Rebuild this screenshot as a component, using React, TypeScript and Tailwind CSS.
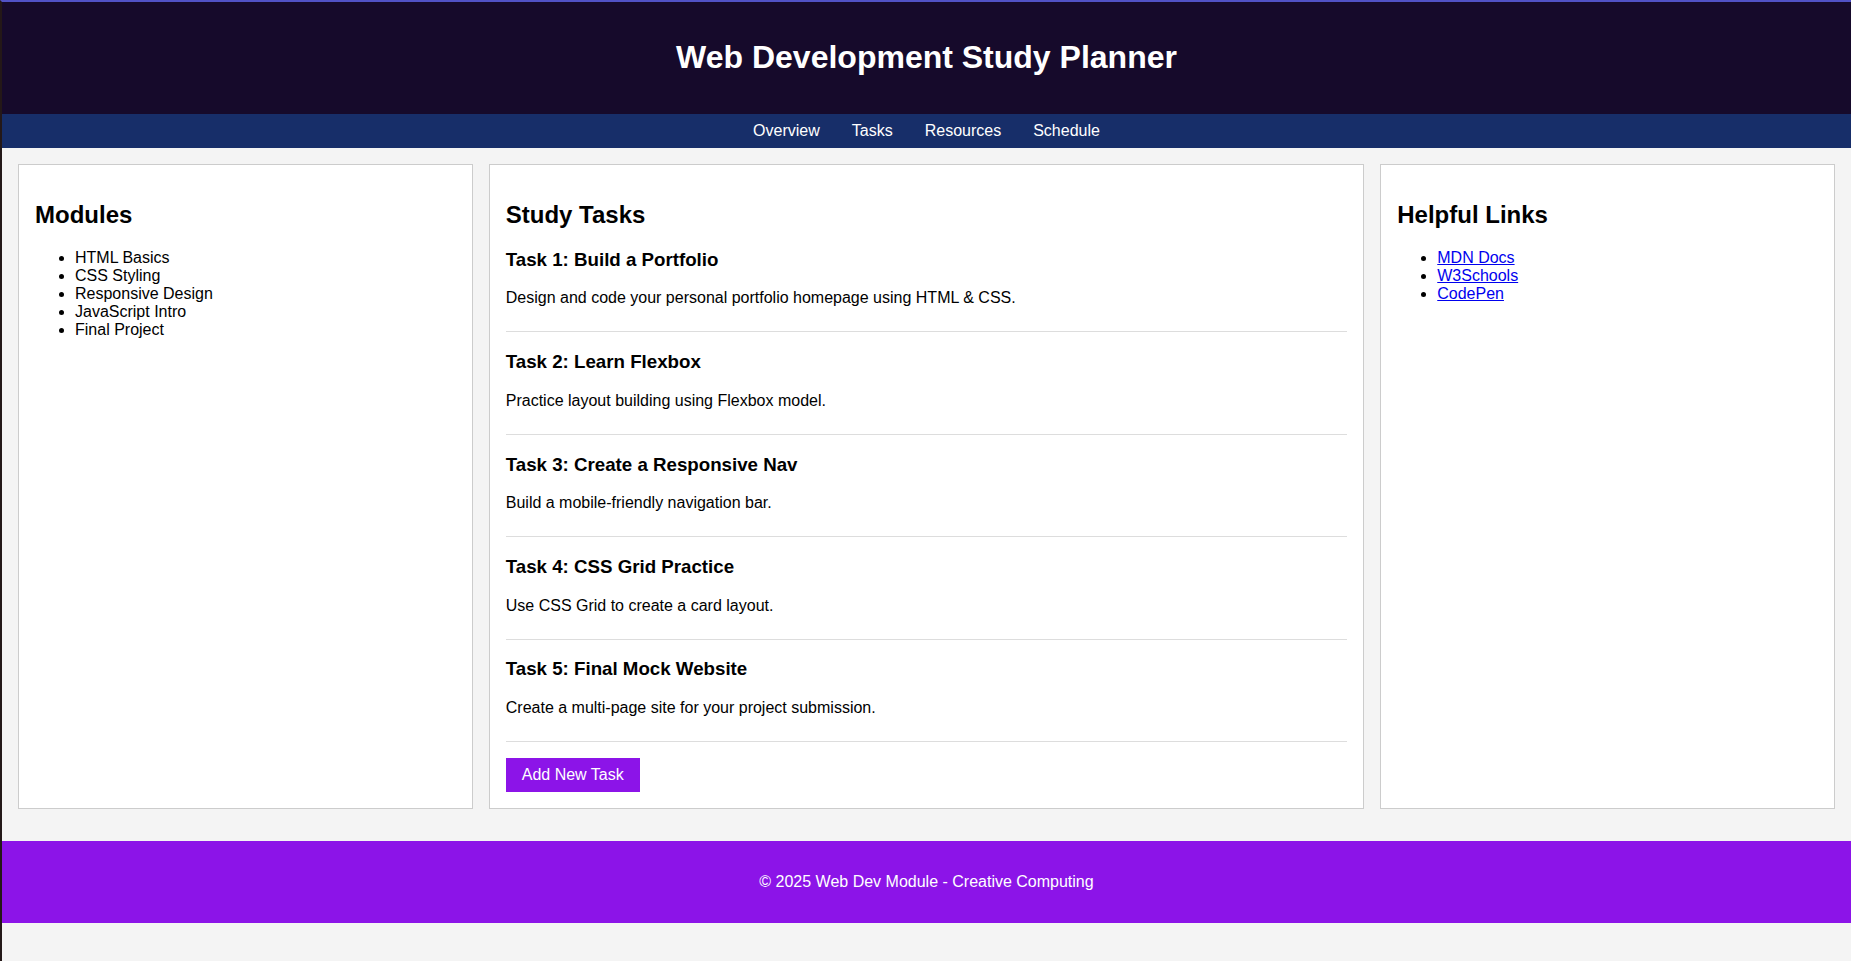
import React from 'react';

const modules = ['HTML Basics', 'CSS Styling', 'Responsive Design', 'JavaScript Intro', 'Final Project'];

const tasks = [
  { title: 'Task 1: Build a Portfolio', text: 'Design and code your personal portfolio homepage using HTML & CSS.' },
  { title: 'Task 2: Learn Flexbox', text: 'Practice layout building using Flexbox model.' },
  { title: 'Task 3: Create a Responsive Nav', text: 'Build a mobile-friendly navigation bar.' },
  { title: 'Task 4: CSS Grid Practice', text: 'Use CSS Grid to create a card layout.' },
  { title: 'Task 5: Final Mock Website', text: 'Create a multi-page site for your project submission.' },
];

const links = ['MDN Docs', 'W3Schools', 'CodePen'];

const navItems = ['Overview', 'Tasks', 'Resources', 'Schedule'];

export default function App() {
  return (
    <div className="min-h-screen bg-[#f4f4f4] border-t-2 border-t-[#5152c6] border-l-2 border-l-[#241818] font-['Liberation_Sans',Arial,sans-serif] leading-[normal] text-black text-[16px]">
      <header className="bg-[#160a2b] py-4 text-white text-center">
        <h1 className="text-[32px] font-bold my-[21.44px]">Web Development Study Planner</h1>
      </header>

      <nav className="bg-[#172e69] py-2 flex justify-center gap-8">
        {navItems.map((item) => (
          <a key={item} href="#" className="text-white no-underline">
            {item}
          </a>
        ))}
      </nav>

      <main className="flex gap-4 p-4">
        <section className="flex-1 bg-white border border-[#cccccc] p-4">
          <h2 className="text-[24px] font-bold my-[19.92px]">Modules</h2>
          <ul className="list-disc pl-10 my-4">
            {modules.map((m) => (
              <li key={m}>{m}</li>
            ))}
          </ul>
        </section>

        <section className="flex-[2] bg-white border border-[#cccccc] p-4">
          <h2 className="text-[24px] font-bold my-[19.92px]">Study Tasks</h2>
          {tasks.map((t) => (
            <div key={t.title} className="pb-2 mb-4 border-b border-[#dddddd]">
              <h3 className="text-[18.72px] font-bold my-[18.72px]">{t.title}</h3>
              <p className="my-4">{t.text}</p>
            </div>
          ))}
          <button className="bg-[#8c14e8] text-white px-4 py-2 text-[16px]">Add New Task</button>
        </section>

        <section className="flex-1 bg-white border border-[#cccccc] p-4">
          <h2 className="text-[24px] font-bold my-[19.92px]">Helpful Links</h2>
          <ul className="list-disc pl-10 my-4">
            {links.map((l) => (
              <li key={l}>
                <a href="#" className="text-[#0000ee] underline">
                  {l}
                </a>
              </li>
            ))}
          </ul>
        </section>
      </main>

      <footer className="mt-4 bg-[#8c14e8] text-white text-center py-4">
        <p className="my-4">© 2025 Web Dev Module - Creative Computing</p>
      </footer>
    </div>
  );
}
